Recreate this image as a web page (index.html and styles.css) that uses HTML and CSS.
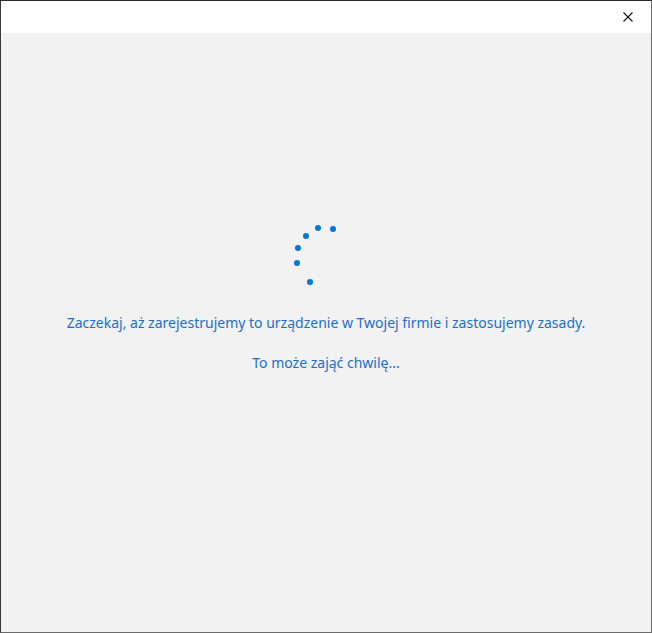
FILE: index.html
```html
<!DOCTYPE html>
<html lang="pl">
<head>
    <meta charset="UTF-8">
    <title>Konfiguracja</title>
    <link rel="stylesheet" href="styles.css">
</head>
<body>
    <div class="window">
        <div class="titlebar">
            <span class="close-button" aria-label="Zamknij">
                <svg width="10" height="10" viewBox="0 0 10 10">
                    <path d="M0.5 0.5 L9.5 9.5 M9.5 0.5 L0.5 9.5" stroke="#111" stroke-width="1.1" fill="none"/>
                </svg>
            </span>
        </div>

        <div class="content">
            <!-- kropki ładowania -->
            <svg class="spinner" width="64" height="64" viewBox="0 0 64 64">
                <circle cx="25" cy="5" r="3"/>
                <circle cx="40" cy="6" r="3"/>
                <circle cx="13" cy="13" r="3"/>
                <circle cx="5" cy="25" r="3"/>
                <circle cx="4" cy="40" r="3"/>
                <circle cx="17" cy="59" r="3"/>
            </svg>
            <p class="message">Zaczekaj, aż zarejestrujemy to urządzenie w Twojej firmie i zastosujemy zasady.</p>
            <p class="message">To może zająć chwilę...</p>
        </div>
    </div>
</body>
</html>
```

FILE: styles.css
```css
html, body {
    margin: 0;
    padding: 0;
}
body {
    font-family: 'Noto Sans', 'Open Sans', sans-serif;
    background-color: #f2f2f2;
}
.window {
    width: 652px;
    height: 633px;
    box-sizing: border-box;
    border: 1px solid #6b6b6b;
    border-top-color: #2b2b2b;
    border-left-color: #3a3a3a;
    background-color: #f2f2f2;
    display: flex;
    flex-direction: column;
}
.titlebar {
    height: 32px;
    background-color: #ffffff;
    display: flex;
    justify-content: flex-end;
    align-items: center;
}
.close-button {
    width: 46px;
    height: 32px;
    display: flex;
    justify-content: center;
    align-items: center;
}
.content {
    flex: 1;
    display: flex;
    flex-direction: column;
    align-items: center;
    padding-top: 190px;
}
.spinner {
    fill: #0078d7;
    margin-left: -2px;
    margin-bottom: 25px;
}
.message {
    margin: 0 0 18px;
    color: #1a6fc6;
    font-size: 14px;
    line-height: 22px;
}
```
